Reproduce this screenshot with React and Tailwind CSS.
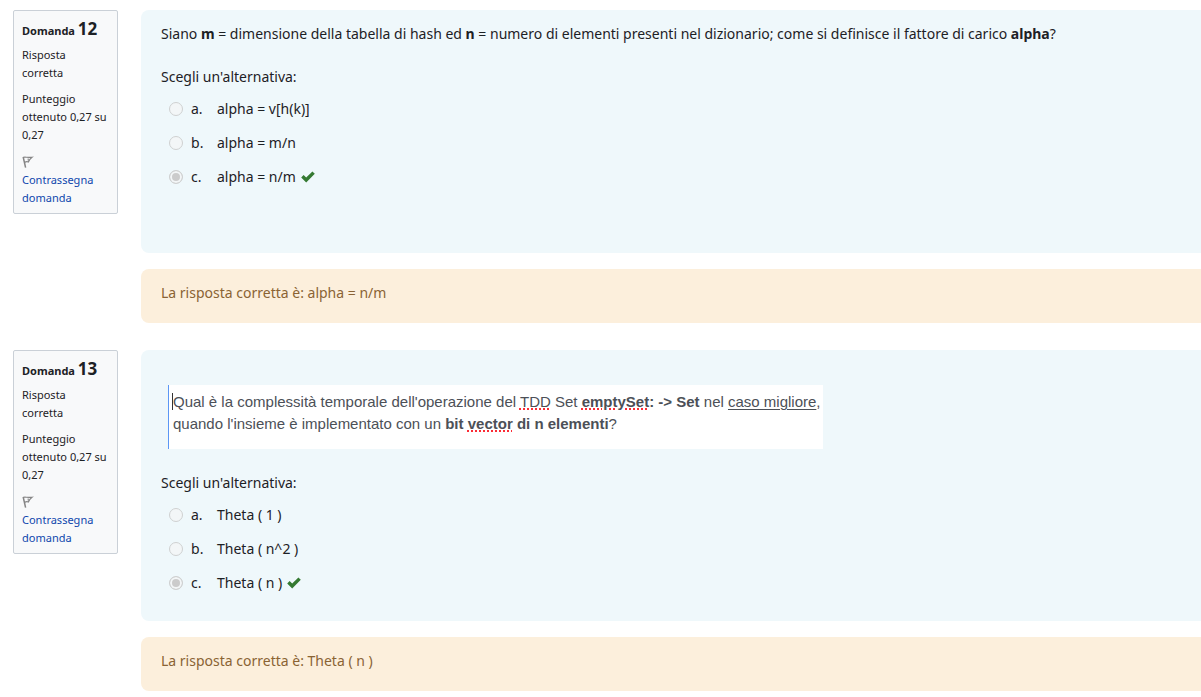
import React from "react";

function FlagIcon() {
  return (
    <svg viewBox="0 0 12 12" className="block h-3 w-3" fill="none" stroke="#858585" aria-hidden="true">
      <path d="M1.2 1 3.6 11.6" strokeWidth="1.5" />
      <path d="M1 1.4C3 .6 5 1.8 10 1.2C8.4 2.4 7.2 4 6.4 6C5.2 5.2 3.8 5.6 2.4 6.4M6.2 2.4V4.4" strokeWidth="1.1" />
    </svg>
  );
}

function CheckIcon() {
  return (
    <svg viewBox="0 0 14 12" className="ml-[5px] h-3 w-[14px] shrink-0" role="img" aria-label="Risposta corretta">
      <path d="M0.2 6.4 2.6 4 5.2 6.6 11.4 0.4 13.8 2.8 5.2 11.4Z" fill="#357a32" />
    </svg>
  );
}

function QuestionInfo({ number }) {
  return (
    <aside className="w-[105px] shrink-0 self-start rounded-xs border border-[#cad0d7] bg-[#f8f9fa] px-2 pt-1 pb-[6px] text-[11px] leading-[18px] text-[#1d2125]">
      <h3 className="mb-[2px] text-[11px] leading-[27px] font-bold whitespace-nowrap">
        Domanda <span className="text-[17px]">{number}</span>
      </h3>
      <div className="mb-2 pr-4">Risposta corretta</div>
      <div className="mb-2">Punteggio ottenuto 0,27 su 0,27</div>
      <a href="#contrassegna" className="block text-[#0f47ad]">
        <span className="flex h-[19px] items-center"><FlagIcon /></span>
        Contrassegna domanda
      </a>
    </aside>
  );
}

function Answers({ name, options, correct }) {
  return (
    <fieldset>
      <legend className="mb-[10px]">Scegli un'alternativa:</legend>
      <div className="flex flex-col gap-3 pl-2">
        {options.map((text, i) => (
          <label key={text} className="flex items-center leading-[22px]">
            <input
              type="radio"
              name={name}
              disabled
              defaultChecked={i === correct}
              className="mr-2 h-[14px] w-[14px] shrink-0 appearance-none rounded-full border border-[#cfd1d1] bg-[#f3f6f7] checked:bg-[#cbcbcb] checked:shadow-[inset_0_0_0_2px_#f3f6f7]"
            />
            <span className="w-[26px] shrink-0">{"abc"[i]}.</span>
            <span>{text}</span>
            {i === correct && <CheckIcon />}
          </label>
        ))}
      </div>
    </fieldset>
  );
}

function Question({ number, prompt, options, correct, answer, formClass }) {
  return (
    <section className="flex gap-[23px]">
      <QuestionInfo number={number} />
      <div className="flex min-w-0 grow flex-col gap-4">
        <div className={`rounded-l-[8px] bg-[#eff8fb] px-5 text-[#1d2125] ${formClass}`}>
          {prompt}
          <Answers name={`q${number}`} options={options} correct={correct} />
        </div>
        <div className="rounded-l-[8px] bg-[#fcefdc] px-5 pt-[13px] pb-[19px] text-[#8a6334]">
          La risposta corretta è: {answer}
        </div>
      </div>
    </section>
  );
}

const misspelt = "underline decoration-red-500 decoration-dotted decoration-2 underline-offset-1";

export default function App() {
  return (
    <main className="flex flex-col gap-[27px] overflow-hidden bg-white py-[10px] pl-[13px] font-['Noto_Sans',sans-serif] text-[14px] leading-[22px]">
      <Question
        number={12}
        formClass="pt-[13px] pb-[65px]"
        prompt={
          <p className="mb-[21px]">
            Siano <b>m</b> = dimensione della tabella di hash ed <b>n</b> = numero di elementi presenti nel
            dizionario; come si definisce il fattore di carico <b>alpha</b>?
          </p>
        }
        options={["alpha = v[h(k)]", "alpha = m/n", "alpha = n/m"]}
        correct={2}
        answer="alpha = n/m"
      />
      <Question
        number={13}
        formClass="pt-[35px] pb-[27px]"
        prompt={
          <div className="mb-[23px] ml-[7px] h-16 w-[655px] max-w-full border-l border-[#5c97f5] bg-white pt-[6px] pl-[4px] font-['Liberation_Sans',Arial,sans-serif] text-[15px] text-[#4c5057]">
            <p>
              <span className="-ml-px border-l border-[#333]">Qual</span> è la complessità temporale dell'operazione del <span className={misspelt}>TDD</span> Set{" "}
              <b><span className={misspelt}>emptySet</span>: -&gt; Set</b> nel <u className="underline-offset-2">caso migliore</u>,
              <br />
              quando l'insieme è implementato con un <b>bit <span className={misspelt}>vector</span> di n elementi</b>?
            </p>
          </div>
        }
        options={["Theta ( 1 )", "Theta ( n^2 )", "Theta ( n )"]}
        correct={2}
        answer="Theta ( n )"
      />
    </main>
  );
}
